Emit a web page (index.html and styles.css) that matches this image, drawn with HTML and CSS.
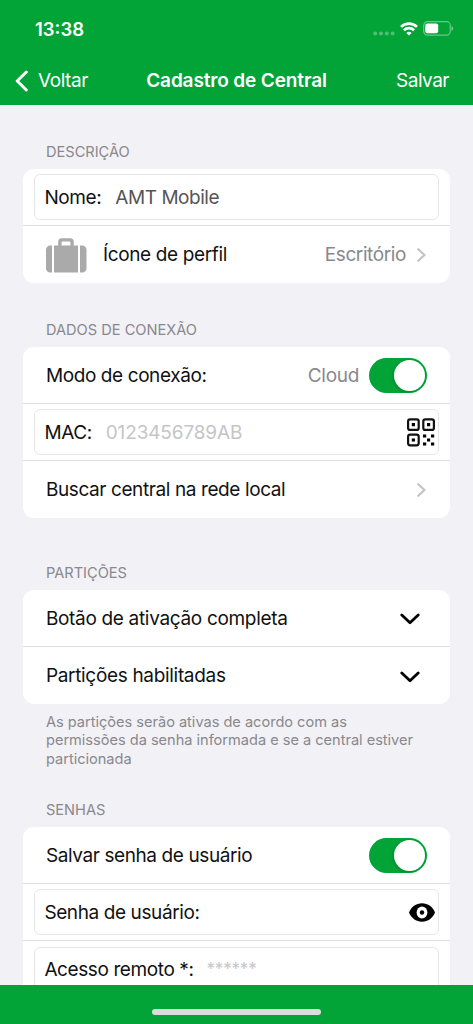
FILE: index.html
```html
<!DOCTYPE html>
<html lang="pt-BR">
<head>
<meta charset="utf-8">
<meta name="viewport" content="width=device-width, initial-scale=1">
<title>Cadastro de Central</title>
<link rel="stylesheet" href="styles.css">
</head>
<body>
<div class="screen">
  <header class="header">
    <div class="status">
      <span class="time">13:38</span>
      <div class="indicators">
        <svg class="signal" width="22" height="5" viewBox="0 0 22 5"><circle cx="2.2" cy="2.5" r="2"/><circle cx="8" cy="2.5" r="2"/><circle cx="13.8" cy="2.5" r="2"/><circle cx="19.6" cy="2.5" r="2"/></svg>
        <svg class="wifi" width="18" height="14" viewBox="0 0 18 14"><path d="M1 4.900a11.500 11.500 0 0 1 16 0"/><path d="M3.900 8.200a7.400 7.400 0 0 1 10.200 0"/><path class="solid" d="M6.300 10.900a4.100 4.100 0 0 1 5.400 0L9 13.600z"/></svg>
        <svg class="battery" width="31" height="15" viewBox="0 0 31 15"><rect class="case" x=".7" y=".7" width="26.600" height="13.400" rx="3.800"/><rect class="level" x="2.300" y="2.500" width="12.900" height="9.800" rx="2"/><path class="tip" d="M28.600 5v4.800c2-.8 2-4 0-4.800z"/></svg>
      </div>
    </div>
    <nav class="navbar">
      <a class="back"><svg width="13" height="22" viewBox="0 0 13 22"><path d="M11.300 2 2.200 11l9.100 9"/></svg><span class="back-label">Voltar</span></a>
      <h1 class="title">Cadastro de Central</h1>
      <a class="save">Salvar</a>
    </nav>
  </header>

  <main class="content">
    <section class="group">
      <h2 class="caption">DESCRIÇÃO</h2>
      <div class="card">
        <div class="row field-row"><label class="field"><span class="label">Nome:</span><span class="value">AMT Mobile</span></label></div>
        <div class="row">
          <svg class="suitcase" width="41" height="36" viewBox="0 0 41 36"><path d="M6 7.400v27.200H4.200A4.200 4.200 0 0 1 0 30.400V11.600A4.200 4.200 0 0 1 4.200 7.400zM8 7.400h4.200V3.900A3.600 3.600 0 0 1 15.800.3h8.400a3.600 3.600 0 0 1 3.600 3.600v3.500H32v27.200H8zM15.600 7.400h8.800V4.600a1 1 0 0 0-1-1h-6.800a1 1 0 0 0-1 1zM34 7.400h2.300a4.200 4.200 0 0 1 4.200 4.200v18.800a4.200 4.200 0 0 1-4.200 4.200H34z"/></svg>
          <span class="label icon-label">Ícone de perfil</span>
          <span class="detail profile">Escritório</span>
          <svg class="chevron" width="9" height="14" viewBox="0 0 9 14"><path d="m1.300 1.200 6.200 5.800-6.200 5.800"/></svg>
        </div>
      </div>
    </section>

    <section class="group connection">
      <h2 class="caption">DADOS DE CONEXÃO</h2>
      <div class="card">
        <div class="row"><span class="label">Modo de conexão:</span><span class="detail">Cloud</span><span class="switch"><i class="knob"></i></span></div>
        <div class="row field-row"><label class="field"><span class="label">MAC:</span><span class="placeholder">0123456789AB</span>
          <svg class="qr" width="28" height="29" viewBox="0 0 28 29"><g class="frames"><rect x="1.100" y="1.300" width="10.600" height="10.600" rx="2"/><rect x="16.300" y="1.300" width="10.600" height="10.600" rx="2"/><rect x="1.100" y="16.700" width="10.600" height="10.600" rx="2"/></g><path d="M4.800 5h3.200v3.200H4.800zM20 5h3.200v3.200H20zM4.800 20.400h3.200v3.200H4.800zM16 16.400h3.200v3.200H16zM24 16.400h3.200v3.200H24zM20 20.400h3.200v3.200H20zM16 24.400h3.200v3.200H16zM24 24.400h3.200v3.200H24z"/></svg>
        </label></div>
        <div class="row"><span class="label">Buscar central na rede local</span><svg class="chevron end" width="9" height="14" viewBox="0 0 9 14"><path d="m1.300 1.200 6.200 5.800-6.200 5.800"/></svg></div>
      </div>
    </section>

    <section class="group partitions">
      <h2 class="caption">PARTIÇÕES</h2>
      <div class="card">
        <div class="row"><span class="label wide">Botão de ativação completa</span><svg class="expand" width="20" height="12" viewBox="0 0 20 12"><path d="m1.800 2 8.200 7.700L18.200 2"/></svg></div>
        <div class="row"><span class="label wide">Partições habilitadas</span><svg class="expand" width="20" height="12" viewBox="0 0 20 12"><path d="m1.800 2 8.200 7.700L18.200 2"/></svg></div>
      </div>
      <p class="note">As partições serão ativas de acordo com as<br>permissões da senha informada e se a central estiver<br>particionada</p>
    </section>

    <section class="group passwords">
      <h2 class="caption">SENHAS</h2>
      <div class="card">
        <div class="row"><span class="label">Salvar senha de usuário</span><span class="switch"><i class="knob"></i></span></div>
        <div class="row field-row"><label class="field"><span class="label">Senha de usuário:</span>
          <svg class="eye" width="26" height="19" viewBox="0 0 26 19"><path class="lid" d="M0 9.500C2.200 4 7 .3 13 .3S23.800 4 26 9.500C23.800 15 19 18.700 13 18.700S2.200 15 0 9.500z"/><ellipse class="iris" cx="13" cy="9.500" rx="5.400" ry="6"/><circle class="lid" cx="13" cy="9.500" r="2.200"/></svg>
        </label></div>
        <div class="row field-row"><label class="field"><span class="label">Acesso remoto *:</span><span class="placeholder stars">******</span></label></div>
      </div>
    </section>
  </main>

  <footer class="footer"><span class="home"></span></footer>
</div>
</body>
</html>
```
FILE: styles.css
```css
* { box-sizing: border-box; }
body { margin: 0; background: #f2f1f6; font-family: Inter, "Liberation Sans", sans-serif; }
.screen { width: 473px; height: 1024px; display: flex; flex-direction: column; overflow: hidden; }
.header { flex: none; height: 105px; background: #02a337; color: #fff; }
.status { height: 56px; padding: 1px 19px 0 35px; display: flex; align-items: center; justify-content: space-between; }
.time { font-size: 18.5px; font-weight: 600; letter-spacing: 0; }
.indicators { display: flex; align-items: center; }
.signal { fill: #fff; opacity: .3; margin: 9px 5px 0 0; }
.wifi { fill: none; stroke: #fff; stroke-width: 2.700; margin-right: 5px; }
.wifi .solid { fill: #fff; stroke: none; }
.battery .case { fill: none; stroke: #fff; stroke-opacity: .4; stroke-width: 1.200; }
.battery .level { fill: #fff; }
.battery .tip { fill: #fff; fill-opacity: .5; }
.navbar { height: 49px; padding: 0 24px 0 15px; display: grid; grid-template-columns: 120px 1fr 111px; align-items: center; font-size: 19px; }
.back { display: flex; align-items: center; gap: 10px; }
.back svg { fill: none; stroke: #fff; stroke-width: 3; stroke-linecap: round; stroke-linejoin: round; }
.back-label { letter-spacing: -.45px; }
.title { margin: 0; font-size: 19px; font-weight: 600; text-align: center; white-space: nowrap; letter-spacing: -.13px; }
.save { text-align: right; letter-spacing: -.5px; }
.content { flex: 1; min-height: 0; overflow: hidden; padding: 36px 23px 0 23.400px; }
.caption { margin: 0 0 6px 22.600px; height: 22px; line-height: 22px; font-size: 14.600px; font-weight: 400; color: #88888d; letter-spacing: 0; }
.card { background: #fff; border-radius: 11px; overflow: hidden; }
.row { height: 57px; display: flex; align-items: center; padding: 0 23px 0 22.500px; font-size: 19px; border-bottom: 1px solid #dfdfe1; white-space: nowrap; }
.row:last-child { border-bottom: 0; }
.field-row { padding: 0 11px; }
.field { flex: 1; height: 46px; display: flex; align-items: center; border: 1.500px solid #e6e6e8; border-radius: 6px; padding: 0 3px 0 9px; }
.label { color: #111; letter-spacing: -.4px; }
.label.wide { letter-spacing: -.32px; }
.value { color: #555; margin-left: 14px; letter-spacing: -.45px; }
.placeholder { color: #c5c5c7; margin-left: 14px; letter-spacing: -.15px; }
.placeholder.stars { font-size: 17px; letter-spacing: -.2px; margin: -1px 0 0 13px; }
.suitcase { fill: #aaa; margin-top: 3px; }
.icon-label { margin-left: 16px; letter-spacing: -.36px; }
.detail { margin-left: auto; color: #88888d; letter-spacing: -.3px; }
.detail.profile { letter-spacing: -.4px; }
.chevron { margin: 0 1px 0 11px; fill: none; stroke: #c3c3c6; stroke-width: 2.200; stroke-linecap: round; stroke-linejoin: round; }
.chevron.end { margin-left: auto; }
.expand { margin: 2px 7.500px 0 auto; fill: none; stroke: #000; stroke-width: 2.800; stroke-linecap: round; stroke-linejoin: round; }
.switch { width: 58px; height: 35px; border-radius: 18px; background: #02a337; margin-left: auto; padding: 2px; display: flex; justify-content: flex-end; }
.detail + .switch { margin-left: 10px; }
.knob { width: 31px; height: 31px; border-radius: 50%; background: #fff; box-shadow: -1px 1px 3px rgba(0,0,0,.18); }
.qr { margin-left: auto; }
.qr .frames { fill: none; stroke: #111; stroke-width: 2.200; }
.eye { margin-left: auto; }
.iris { fill: #fff; }
.connection { margin-top: 36px; }
.partitions { margin-top: 44px; }
.note { margin: 9px 0 0 22.600px; font-size: 14.600px; line-height: 18.300px; letter-spacing: -.02px; color: #88888d; white-space: nowrap; }
.passwords { margin-top: 31px; }
.passwords .row:first-child { height: 57.500px; }
.footer { flex: none; height: 39px; background: #02a337; display: flex; justify-content: center; padding-top: 24px; }
.home { width: 169px; height: 6px; border-radius: 3px; background: #dcdcdc; }
```
